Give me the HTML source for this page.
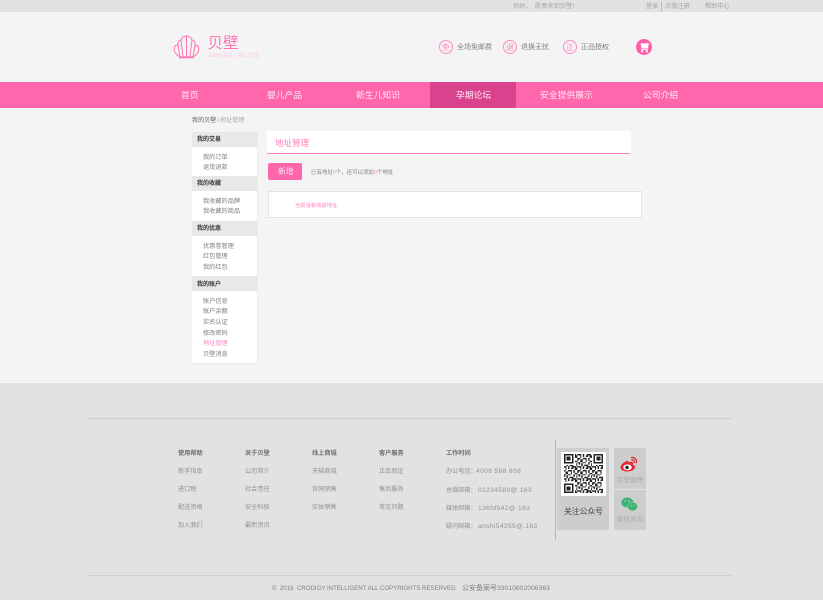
<!DOCTYPE html>
<html lang="zh"><head><meta charset="utf-8"><title>地址管理</title>
<style>
html,body{margin:0;padding:0;background:#f4f4f4}
body{width:823px;height:600px;overflow:hidden;position:relative;font-family:"Liberation Sans","Noto Sans CJK SC",sans-serif}
#w{left:0;top:0;width:823px;height:600px;overflow:hidden;filter:blur(.3px)}
div,svg{position:absolute}
.t{white-space:nowrap;line-height:12px;height:12px}
.s{font-size:6.200px;color:#808080;transform:translateY(1px)}
.h{font-size:6px;color:#3a3a3a;font-weight:bold;left:197px;transform:translateY(1px)}
.f{font-size:6.200px;color:#929292;transform:translateY(1px)}
.fh{font-size:6.200px;color:#6e6e6e;font-weight:bold;transform:translateY(1px)}
.n{font-size:8.800px;color:#ffeaf4;top:89px}
.tb{font-size:6.200px;color:#a4a4a4;top:0px;transform:translateY(1px)}
.g{font-size:7px;color:#808080;top:42px}
.c{font-size:6.100px;color:#929292;transform:translateY(1px)}
.l{font-size:6.600px;color:#929292;letter-spacing:.4px;transform:translateY(1px)}
</style></head><body><div id="w">
<div style="left:0;top:0;width:823px;height:12px;background:#e2e2e2"></div>
<div class="t tb" style="left:513px">你好，&nbsp; 愿意来到贝壁！</div>
<div class="t tb" style="left:646px">登录</div>
<div style="left:661px;top:2px;width:1px;height:9px;background:#bbb"></div>
<div class="t tb" style="left:665px">点我注册</div>
<div class="t tb" style="left:705px">帮助中心</div>

<svg style="left:173px;top:35px" width="27" height="24" viewBox="0 0 27 24" fill="none" stroke="#ff74b4" stroke-width="1">
<path d="M7 22C2 19 0 15 2 11C3 10 4.500 10 5 10C4.500 7 6 5 8 5C9 2.500 11 1 13.500 1C16 1 18 2.500 19 5C21 5 22.500 7 22 10C23 10 24 10 25 11C27 15 25 19 20 22Z"/>
<path d="M7 22L5 10M10 22L8 5M13.500 22V1M17 22L19 5M20 22L22 10"/>
<path d="M6 22.500H21" stroke-width="1.500"/></svg>
<div class="t" style="left:207.500px;top:38px;font-size:15.500px;color:#ff74b4">贝壁</div>
<div class="t" style="left:208px;top:49.500px;font-size:5.400px;color:#fbc9e1">100%正品，放心为您</div>

<svg style="left:438px;top:39px" width="142" height="16" fill="none" stroke="#ff8cc2" stroke-width="1"><circle cx="8" cy="8" r="6.500"/><circle cx="72" cy="8" r="6.500"/><circle cx="132" cy="8" r="6.500"/></svg>
<div class="t" style="left:442px;top:41.500px;font-size:8px;color:#ff8cc2">免</div>
<div class="t" style="left:506px;top:41.500px;font-size:8px;color:#ff8cc2">退</div>
<div class="t" style="left:566px;top:41.500px;font-size:8px;color:#ff8cc2">正</div>
<div class="t g" style="left:457px">全场免邮费</div>
<div class="t g" style="left:521px">退换无忧</div>
<div class="t g" style="left:581px">正品授权</div>
<svg style="left:636px;top:39px" width="16" height="16" viewBox="0 0 16 16"><circle cx="8" cy="8" r="8" fill="#ff5fa9"/><path d="M3 4.500L12.800 4.300L12 9.500H5.500L4.800 4.800" fill="#fff"/><rect x="5" y="10.300" width="7" height="1" fill="#fff"/><circle cx="6" cy="12.500" r="1" fill="#fff"/><circle cx="11" cy="12.500" r="1" fill="#fff"/></svg>

<div style="left:0;top:82px;width:823px;height:26px;background:#ff66ab"></div>
<div style="left:430px;top:82px;width:86px;height:26px;background:#d9438d"></div>
<div class="t n" style="left:181px">首页</div>
<div class="t n" style="left:267px">婴儿产品</div>
<div class="t n" style="left:356px">新生儿知识</div>
<div class="t n" style="left:456px">孕期论坛</div>
<div class="t n" style="left:540px">安全提供展示</div>
<div class="t n" style="left:643px">公司介绍</div>

<div class="t" style="left:192px;top:115px;font-size:6.100px;color:#666">我的贝壁<span style="color:#aaa">&gt;地址管理</span></div>

<div style="left:192px;top:132px;width:65px;height:231px;background:#fff;border-right:1px solid #ececec;border-bottom:1px solid #ececec"></div>
<div style="left:192px;top:132px;width:66px;height:15px;background:#e8e8e8"></div>
<div style="left:192px;top:176px;width:66px;height:15px;background:#e8e8e8"></div>
<div style="left:192px;top:221px;width:66px;height:15px;background:#e8e8e8"></div>
<div style="left:192px;top:276px;width:66px;height:15px;background:#e8e8e8"></div>
<div class="t h" style="top:133px">我的交易</div>
<div class="t h" style="top:177px">我的收藏</div>
<div class="t h" style="top:222px">我的优惠</div>
<div class="t h" style="top:277.500px">我的账户</div>
<div class="t s" style="left:203px;top:151px">我的订单</div>
<div class="t s" style="left:203px;top:161px">退货退款</div>
<div class="t s" style="left:203px;top:195px">我收藏的品牌</div>
<div class="t s" style="left:203px;top:205px">我收藏的商品</div>
<div class="t s" style="left:203px;top:240px">优惠卷管理</div>
<div class="t s" style="left:203px;top:250px">红包管理</div>
<div class="t s" style="left:203px;top:261px">我的红包</div>
<div class="t s" style="left:203px;top:295px">账户信息</div>
<div class="t s" style="left:203px;top:305px">账户余额</div>
<div class="t s" style="left:203px;top:316px">实名认证</div>
<div class="t s" style="left:203px;top:327px">修改密码</div>
<div class="t s" style="left:203px;top:337px;color:#ff8cc6">地址管理</div>
<div class="t s" style="left:203px;top:348px">贝壁消息</div>

<div style="left:267px;top:131px;width:364px;height:22px;background:#fff"></div>
<div style="left:267px;top:153px;width:363px;height:1px;background:#ff80bd"></div>
<div class="t" style="left:275px;top:137px;font-size:8.500px;color:#ff80bd">地址管理</div>
<div style="left:268px;top:163px;width:34px;height:17px;background:#ff66ab;border-radius:2px"></div>
<div class="t" style="left:278px;top:165.500px;font-size:7.800px;color:#ffeaf4">新增</div>
<div class="t" style="left:311px;top:167px;font-size:5.450px;color:#808080">已有地址<span style="color:#ff8cc6">0</span>个，还可以添加<span style="color:#ff8cc6">0</span>个地址</div>
<div style="left:268px;top:191px;width:372px;height:25px;background:#fff;border:1px solid #e2e2e2"></div>
<div class="t" style="left:295px;top:200px;font-size:5.300px;color:#ff80bd">当前没有收获地址</div>

<div style="left:0;top:383px;width:823px;height:217px;background:#e2e2e2"></div>
<div style="left:88px;top:418px;width:644px;height:1px;background:#d0d0d0"></div>
<div style="left:88px;top:575px;width:644px;height:1px;background:#d0d0d0"></div>

<div class="t fh" style="left:178px;top:447px">使用帮助</div>
<div class="t f" style="left:178px;top:465px">新手指南</div>
<div class="t f" style="left:178px;top:483px">进口税</div>
<div class="t f" style="left:178px;top:501px">配送资格</div>
<div class="t f" style="left:178px;top:518.500px">加入我们</div>
<div class="t fh" style="left:245px;top:447px">关于贝壁</div>
<div class="t f" style="left:245px;top:465px">公司简介</div>
<div class="t f" style="left:245px;top:483px">社会责任</div>
<div class="t f" style="left:245px;top:501px">安全科技</div>
<div class="t f" style="left:245px;top:518.500px">最新资讯</div>
<div class="t fh" style="left:312px;top:447px">线上商城</div>
<div class="t f" style="left:312px;top:465px">天猫商城</div>
<div class="t f" style="left:312px;top:483px">官网销售</div>
<div class="t f" style="left:312px;top:501px">实体销售</div>
<div class="t fh" style="left:379px;top:447px">客户服务</div>
<div class="t f" style="left:379px;top:465px">正品验证</div>
<div class="t f" style="left:379px;top:483px">售后服务</div>
<div class="t f" style="left:379px;top:501px">常见问题</div>
<div class="t fh" style="left:446px;top:447px">工作时间</div>
<div class="t c" style="left:446px;top:465px">办公电话：</div>
<div class="t l" style="left:476px;top:465px">4008 568 808</div>
<div class="t c" style="left:446px;top:483.500px">总裁邮箱：</div>
<div class="t l" style="left:478px;top:483.500px">01234589@.163</div>
<div class="t c" style="left:446px;top:501.500px">媒体邮箱：</div>
<div class="t l" style="left:478px;top:501.500px">136fd542@.163</div>
<div class="t c" style="left:446px;top:519.500px">疑问邮箱：</div>
<div class="t l" style="left:478px;top:519.500px">anshi54255@.163</div>

<div style="left:554.500px;top:440px;width:1px;height:100px;background:#b5b5b5"></div>
<div style="left:557px;top:448px;width:52px;height:82px;background:#cdcdcd"></div>
<div style="left:614px;top:448px;width:32px;height:40.500px;background:#cdcdcd"></div>
<div style="left:614px;top:489.500px;width:32px;height:40.500px;background:#cdcdcd"></div>
<div style="left:561px;top:452px;width:45px;height:44px;background:#fff"></div>
<svg style="left:564px;top:454px" width="39" height="39" viewBox="0 0 29 29" shape-rendering="crispEdges">
<defs><pattern id="q" width="11" height="9" patternUnits="userSpaceOnUse"><path fill="#222" d="M0 0h2v1H0zM3 0h1v2H3zM6 0h3v1H6zM10 0h1v1h-1zM1 1h1v2H1zM5 1h2v1H5zM8 1h2v2H8zM0 3h1v1H0zM3 3h3v1H3zM7 3h1v2H7zM10 3h1v2h-1zM1 4h2v2H1zM5 4h1v2H5zM8 5h2v1H8zM0 6h1v2H0zM3 6h2v1H3zM7 6h1v2H7zM10 6h1v1h-1zM2 7h1v2H2zM4 8h3v1H4zM9 7h1v2H9z"/></pattern></defs>
<rect width="29" height="29" fill="url(#q)"/>
<g fill="#fff"><rect width="8" height="8"/><rect x="21" width="8" height="8"/><rect y="21" width="8" height="8"/></g>
<path fill="#222" fill-rule="evenodd" d="M0 0h7v7H0zM1 1v5h5V1zM2 2h3v3H2zM22 0h7v7h-7zM23 1v5h5V1zM24 2h3v3h-3zM0 22h7v7H0zM1 23v5h5v-5zM2 24h3v3H2z"/></svg>
<div class="t" style="left:564px;top:506px;font-size:7.800px;color:#444">关注公众号</div>
<svg style="left:620px;top:456px" width="18" height="16" viewBox="0 0 18 16"><path fill="#e8262d" d="M7 5C3.500 6 .5 9 .5 11.500C.5 14 4 15.500 7.500 15.500C11.500 15.500 15 13.500 15 11C15 9.500 13.500 9 12.800 8.800C13.300 7.500 13.200 6 11.500 5.800C10 5.600 8.500 6.500 8.300 6.500C8.500 5 8.300 4.600 7 5Z"/><ellipse cx="7.500" cy="11.300" rx="4.300" ry="2.900" fill="#fff"/><circle cx="7" cy="11.500" r="1.700" fill="#222"/><path d="M11.500 1.500C14.500 1 17 3.500 16.300 6.800M11.800 3.800C13.300 3.500 14.500 4.700 14.100 6.300" fill="none" stroke="#e8262d" stroke-width="1.300" stroke-linecap="round"/></svg>
<div class="t" style="left:617px;top:474.500px;font-size:6.500px;color:#aaa">贝壁微博</div>
<svg style="left:621px;top:497px" width="17" height="15" viewBox="0 0 17 15"><ellipse cx="6.300" cy="5.500" rx="6" ry="5" fill="#3cb371"/><ellipse cx="11.500" cy="9.500" rx="5" ry="4.300" fill="#3cb371" stroke="#cdcdcd" stroke-width=".5"/><circle cx="4.300" cy="4" r=".8" fill="#cdcdcd"/><circle cx="8.200" cy="4" r=".8" fill="#cdcdcd"/><circle cx="10" cy="8.500" r=".6" fill="#cdcdcd"/><circle cx="13" cy="8.500" r=".6" fill="#cdcdcd"/></svg>
<div class="t" style="left:617px;top:513.500px;font-size:6.500px;color:#aaa">微信咨询</div>

<div class="t" style="left:272px;top:582.500px;font-size:6.120px;color:#808080">©&nbsp; 2016&nbsp; CRODIGY INTELLIGENT ALL COPYRIGHTS RESERVED</div>
<div class="t" style="left:462px;top:582.500px;font-size:7px;color:#808080">公安备案号</div>
<div class="t" style="left:497px;top:582.500px;font-size:6.800px;color:#808080">33010802006363</div>
</div></body></html>
